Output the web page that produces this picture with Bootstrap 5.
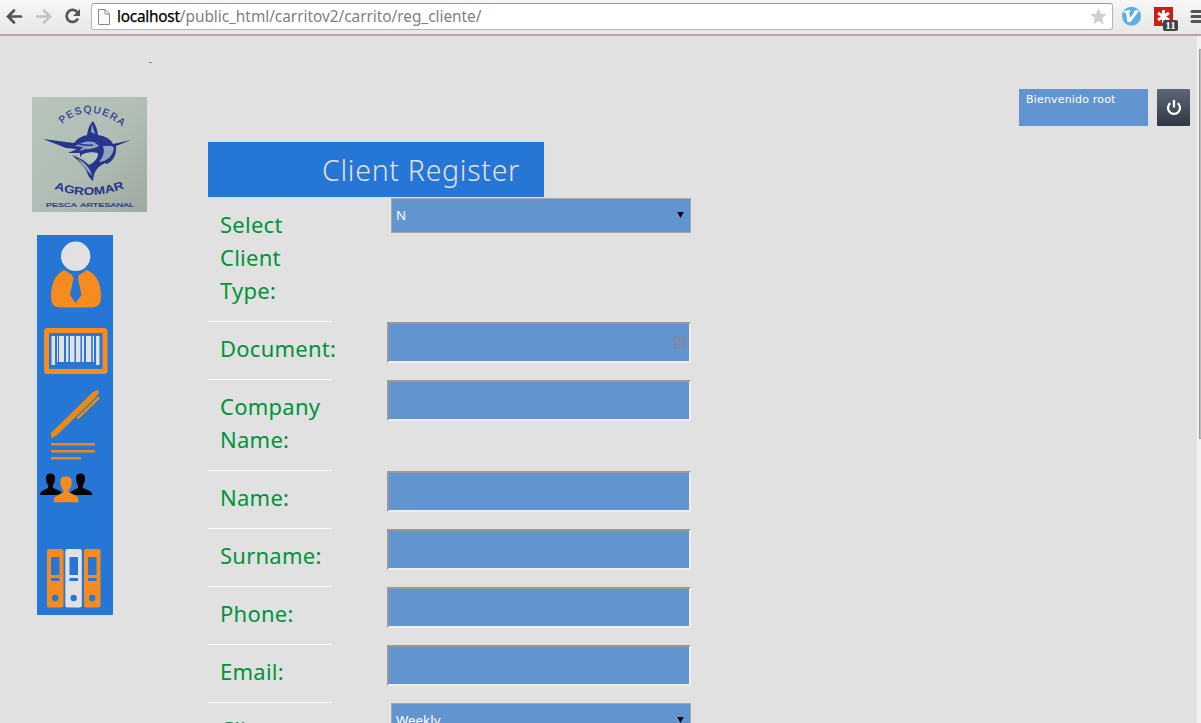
<!DOCTYPE html>
<html lang="en">
<head>
<meta charset="utf-8">
<meta name="viewport" content="width=device-width, initial-scale=1">
<title>Client Register</title>
<link href="https://cdn.jsdelivr.net/npm/bootstrap@5.3.0/dist/css/bootstrap.min.css" rel="stylesheet">
<style>
  body { background: #e1e1e1; font-family: "Noto Sans", sans-serif; height: 723px; }
  svg { display: block; flex: none; }
  .browser-bar { height: 36px; padding: 3px 0 0 6px; background: linear-gradient(#f7f7f7, #e6e6e6); border-bottom: 1px solid #94b1dc; box-shadow: inset 0 -1px #aaa; }
  .address { width: 1022px; height: 27px; margin-left: 9px; padding: 0 5px 0 6px; background: #fff; border: 1px solid #b4b4b4; border-top-color: #999; border-radius: 3px; }
  .address-text { margin-left: 7px; font: 15.4px/24px "Noto Sans", sans-serif; letter-spacing: -.03px; color: #808080; white-space: pre; }
  .address-text b { color: #000; font-weight: 400; letter-spacing: -.25px; -webkit-text-stroke: .25px #000; }
  .ext-count { left: 9px; top: 13px; width: 15px; height: 11px; background: #444; border-radius: 2px; color: #fff; font: bold 11px/11px "Liberation Serif", serif; }
  .page-area { height: 687px; overflow: hidden; }
  .side { width: 208px; padding: 0 0 0 32px; }
  .dash { height: 61px; padding: 26px 0 0 117px; }
  .dash i { display: block; width: 3px; height: 1px; background: #888; }
  .menu-strip { width: 76px; height: 380px; margin: 23px 0 0 5px; background: #2576d5; }
  .main-col { width: 483px; height: 687px; padding-top: 106px; overflow: hidden; }
  .title-bar { width: 336px; height: 55px; margin-bottom: 1px; padding-right: 24px; background: #2576d5; color: #e1e1e1; font: 300 28.5px/56px "Noto Sans", sans-serif; }
  .title-bar span { letter-spacing: .7px; }
  .field-label { width: 124px; padding: 10px 0 14px 12px; border-bottom: 1px solid #fff; color: #00933b; font-size: 22px; line-height: 33px; letter-spacing: .25px; white-space: nowrap; }
  .field-box { width: 304px; height: 41px; background: #6295cf; border: 2px solid; border-color: #999 #eee #eee #999; padding-right: 4px; }
  .pick { width: 300px; height: 35px; background: #6295cf; border: 1px solid #a6a6a6; color: #fff; font: 13.3px/33px "Noto Sans", sans-serif; padding: 0 6px 0 4px; }
  .user-col { padding: 53px 7px 0 0; gap: 9px; }
  .welcome { width: 129px; height: 37px; padding: 2px 7px; background: #6295cf; color: #fff; font: 11px/18px "DejaVu Sans", sans-serif; letter-spacing: .18px; white-space: nowrap; }
  .power { width: 33px; height: 37px; background: linear-gradient(#5d6776, #303846); border-radius: 1px; }
  .scroll-track { width: 4px; background: #f1f1f1; padding: 13px 0 0 2px; }
  .scroll-thumb { height: 390px; background: #bbb; border: 1px solid #999; border-right: 0; }
</style>
</head>
<body class="overflow-hidden">
<header class="browser-bar d-flex align-items-start">
  <svg width="76" height="27" viewBox="6 3 76 27" fill="none">
    <path d="M21 16.500H8.500M14 10.500L8 16.500L14 22.500" stroke="#555" stroke-width="2.700" stroke-linecap="round"/>
    <path d="M37 16.500H49.500M44 10.500L50 16.500L44 22.500" stroke="#c4c4c4" stroke-width="2.700" stroke-linecap="round"/>
    <path d="M77.500 12.500A6 6 0 1 0 78 18.500" stroke="#555" stroke-width="2.700"/><path d="M80 9V16H73Z" fill="#555"/>
  </svg>
  <div class="address d-flex align-items-center">
    <svg width="12" height="16" viewBox="0 0 12 16" fill="#fafafa" stroke="#888"><path d="M.5.500H7L11.500 5V15.500H.5ZM7 .5V5H11.500"/></svg>
    <div class="address-text flex-grow-1"><b>localhost</b>/public_html/carritov2/carrito/reg_cliente/</div>
    <svg width="17" height="17" viewBox="0 0 17 17" fill="#cfcfcf"><path d="M8.500 0L10.800 5.700L17 6.200L12.200 10.100L13.800 16.500L8.500 13L3.200 16.500L4.800 10.100L0 6.200L6.200 5.700Z"/></svg>
  </div>
  <svg class="ms-2" style="margin-top:3px" width="20" height="20" viewBox="0 0 20 20"><circle cx="10.500" cy="10.300" r="9.500" fill="#62aee0"/><path d="M3 5L9 4V6H8L9 12L13.500 6L12.500 5L17 4L17.500 5.500L9.500 16H6.500L5 6.500L3 7Z" fill="#fff"/></svg>
  <div class="position-relative" style="margin:4px 0 0 13px">
    <svg width="19" height="19" viewBox="0 0 19 19"><rect width="19" height="19" fill="#cf1c18"/><path d="M9.500 3V16M4 6L15 13M4 13L15 6" stroke="#fff" stroke-width="3"/></svg>
    <span class="ext-count position-absolute text-center">11</span>
  </div>
  <svg style="margin:7px 0 0 17px" width="11" height="14" viewBox="0 0 11 14"><path d="M2 1.500H12M2 6.500H12M2 11.500H12" stroke="#555" stroke-width="3" stroke-linecap="round"/></svg>
</header>

<div class="page-area d-flex">
  <aside class="side">
    <div class="dash"><i></i></div>
    <svg width="115" height="115" viewBox="0 0 115 115" font-family="Liberation Sans, sans-serif" fill="#26358e">
      <defs>
        <linearGradient id="paper" x2="1" y2="1"><stop stop-color="#b6c4bc"/><stop offset=".5" stop-color="#b1beb6"/><stop offset="1" stop-color="#9eaaa0"/></linearGradient>
        <path id="arcTop" d="M30 27Q57 4 88 28"/><path id="arcLow" d="M22 91Q57 104 96 89"/>
      </defs>
      <rect width="115" height="115" fill="url(#paper)"/>
      <text font-size="10" stroke="#26358e" stroke-width=".2"><textPath href="#arcTop" textLength="66">PESQUERA</textPath></text>
      <path d="M11 42L42 46Q46 40 55 38C56 31 58 27 61 24Q65 30 66 38Q78 40 81 47L99 43L84 49C85 58 81 64 75 67L73 66L68 69Q62 73 61 84Q56 80 55 75C52 68 45 63 40 58Q51 62 57 68C62 66 66 61 66 56Q57 54 51 57L48 60L48 56L36 56L45 52L34 51Z"/>
      <path d="M59 35L60 27L63 37ZM43 49Q53 43 62 45L67 49Q60 53 54 52L47 54L51 50ZM71 49Q82 47 82 52Q79 64 67 65Q74 57 71 49ZM45 61Q58 68 60 79Q53 71 45 61Z" fill="#91a4bf"/>
      <path d="M49 58Q63 53 66 58Q64 65 58 65Q53 62 49 58Z" fill="#b6c4bc"/>
      <path d="M43 46Q54 49 61 48M60 43Q66 43 73 48L82 48" stroke="#26358e" fill="none" stroke-width="1.500"/>
      <text transform="translate(0 1)" font-size="11" font-weight="bold"><textPath href="#arcLow" textLength="72" lengthAdjust="spacingAndGlyphs">AGROMAR</textPath></text>
      <text x="14" y="109.500" font-size="6.200" textLength="88" lengthAdjust="spacingAndGlyphs" word-spacing="1.500" stroke="#26358e" stroke-width=".2">PESCA ARTESANAL</text>
    </svg>
    <nav class="menu-strip">
      <svg width="76" height="380" viewBox="37 235 76 380">
        <circle cx="75.700" cy="256.300" r="14.700" fill="#e1e1e1"/>
        <path d="M64.500 270L72 275L73.500 278.500L70 295L75.500 303L81.500 295L78 278.500L79 275L87 270Q101 276 101 297Q101 307.500 92 307.500H60Q51 307.500 51 297Q51 276 64.500 270Z" fill="#f68b1f"/>
        <rect x="46.500" y="330.500" width="58.500" height="41" rx="1" fill="none" stroke="#f68b1f" stroke-width="5"/>
        <path d="M51.500 336H55V365H51.500ZM57 336H58V362H57ZM59 336H64V362H59ZM66 336H68V362H66ZM70 336H74V362H70ZM76 336H80V362H76ZM82 336H84V362H82ZM86 336H91V362H86ZM93 336H94V362H93ZM96 336H99.500V365H96Z" fill="#e1e1e1"/>
        <path d="M68.500 336V362M74.500 336V362M80.500 336V362M92 336V362" stroke="#9fbade" stroke-width=".7"/>
        <g fill="#e78b17"><path d="M51 433L93 392Q98 389 99 391Q99 394 95 398L56 436L51 438Z"/><path d="M78 418L98.500 398" stroke="#e78b17" stroke-width="2.500" stroke-linecap="round"/><path d="M51 443H95V445.500H51ZM51 450H95V452.500H51ZM51 457H81V459.500H51Z"/></g>
        <path id="bust" d="M46 478Q46 473.500 50.500 473.500Q55 473.500 55 478Q55 483 53 485L53 488L60 491Q62 492 62 495H40Q40 492 42 491L48 488V485Q46 483 46 478Z"/><use href="#bust" x="30"/>
        <path d="M60 482Q60 476 66 476Q72 476 72 482Q72 487 69 490V492.500L77 496Q79 497 79 502.500H53.500Q53.500 497 56 496L63 492.500V490Q60 487 60 482Z" fill="#f68b1f" stroke="#2576d5" stroke-width=".5"/>
        <rect x="47" y="549" width="16.500" height="58.500" rx="2" fill="#f68b1f"/><rect x="65.300" y="549" width="16.500" height="58.500" rx="2" fill="#e1e1e1"/><rect x="84" y="549" width="16.500" height="58.500" rx="2" fill="#f68b1f"/>
        <g fill="#2576d5"><path d="M51 557H59.500V575H51ZM69.500 557H78V575H69.500ZM88 557H96.500V575H88ZM51 578H59.500V581H51ZM69.500 578H78V581H69.500ZM88 578H96.500V581H88Z"/><circle cx="55.200" cy="598" r="3.200"/><circle cx="73.700" cy="598" r="3.200"/><circle cx="92.200" cy="598" r="3.200"/></g>
      </svg>
    </nav>
  </aside>

  <main class="main-col">
    <h1 class="title-bar text-end"><span>Client Register</span></h1>
    <div class="d-flex justify-content-between align-items-start"><div class="field-label">Select<br>Client<br>Type:</div><div class="pick d-flex justify-content-between"><span>N</span><svg class="mt-2" width="7" height="16" viewBox="0 0 7 16"><path d="M.3 5H6.700L3.500 11Z"/></svg></div></div>
    <div class="d-flex justify-content-between align-items-start"><div class="field-label">Document:</div><div class="field-box d-flex align-items-center justify-content-end"><svg width="11" height="13" viewBox="0 0 11 13"><rect x=".7" y=".7" width="9.600" height="11.600" rx="1" fill="none" stroke="#818693" stroke-width="1.300"/><path d="M5.500 2.500L7.500 6.500H3.500ZM3 8H8V9.300H3Z" fill="#818693"/></svg></div></div>
    <div class="d-flex justify-content-between align-items-start"><div class="field-label">Company<br>Name:</div><div class="field-box"></div></div>
    <div class="d-flex justify-content-between align-items-start"><div class="field-label">Name:</div><div class="field-box"></div></div>
    <div class="d-flex justify-content-between align-items-start"><div class="field-label">Surname:</div><div class="field-box"></div></div>
    <div class="d-flex justify-content-between align-items-start"><div class="field-label">Phone:</div><div class="field-box"></div></div>
    <div class="d-flex justify-content-between align-items-start"><div class="field-label">Email:</div><div class="field-box"></div></div>
    <div class="d-flex justify-content-between align-items-start"><div class="field-label">Client</div><div class="pick d-flex justify-content-between"><span>Weekly</span><svg class="mt-2" width="7" height="16" viewBox="0 0 7 16"><path d="M.3 5H6.700L3.500 11Z"/></svg></div></div>
  </main>

  <div class="user-col d-flex align-items-start ms-auto">
    <div class="welcome">Bienvenido root</div>
    <div class="power d-flex align-items-center justify-content-center">
      <svg width="16" height="16" viewBox="0 0 16 16" fill="none" stroke="#fff" stroke-width="2.300"><path d="M4.200 3.200A6 6 0 1 0 11.800 3.200M8 0V7.500"/></svg>
    </div>
  </div>
  <div class="scroll-track"><div class="scroll-thumb"></div></div>
</div>
<script src="https://cdn.jsdelivr.net/npm/bootstrap@5.3.0/dist/js/bootstrap.bundle.min.js"></script>
</body>
</html>
